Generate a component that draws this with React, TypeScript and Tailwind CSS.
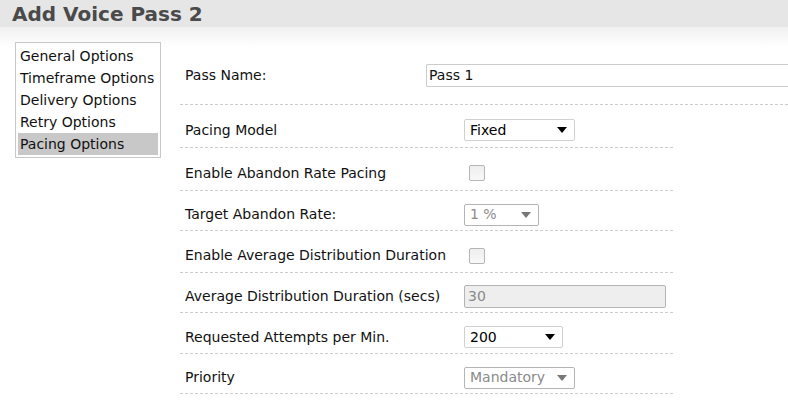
import React from 'react';

const font = { fontFamily: '"DejaVu Sans", Verdana, sans-serif' };

function Caret({ disabled }: { disabled?: boolean }) {
  return (
    <svg width="10" height="6" viewBox="0 0 10 6" className="shrink-0">
      <path d="M0 0 L10 0 L5 6 Z" fill={disabled ? '#777777' : '#000000'} />
    </svg>
  );
}

function Select({ value, width, disabled }: { value: string; width: string; disabled?: boolean }) {
  return (
    <div
      className={`flex h-[22px] items-center justify-between rounded-[2px] border pl-[5px] pr-[7px] ${width} ${
        disabled ? 'border-[#b4b4b4] text-[#8a8a8a]' : 'border-[#d0d0d0] text-black'
      }`}
    >
      <span>{value}</span>
      <Caret disabled={disabled} />
    </div>
  );
}

function Checkbox() {
  return <div className="ml-[5px] h-[16px] w-[16px] rounded-[2px] border border-[#b5b5b5] bg-gradient-to-b from-[#eeeeee] to-[#f8f8f8]" />;
}

function Row({ label, h, children }: { label: string; h: string; children: React.ReactNode }) {
  return (
    <div className={`flex items-center border-b border-dashed border-[#cccccc] pt-[8px] ${h}`}>
      <div className="w-[284px] pl-[5px]">{label}</div>
      <div className="flex items-center">{children}</div>
    </div>
  );
}

export default function App() {
  const menu = ['General Options', 'Timeframe Options', 'Delivery Options', 'Retry Options', 'Pacing Options'];
  return (
    <div className="h-[400px] w-[788px] overflow-hidden bg-white text-[14px] text-[#111]" style={font}>
      <div className="h-[27px] bg-[#e6e6e6] pl-[12px] text-[20px] font-bold leading-[28px] text-[#4a4a4a]">
        Add Voice Pass 2
      </div>
      <div className="flex bg-gradient-to-b from-[#f0f0f0] to-white to-[20px] pt-[15px]">
        <div className="ml-[15px] h-[116px] w-[146px] shrink-0 border border-[#c8c8c8] px-[2px] pt-[2px]">
          {menu.map((m) => (
            <div
              key={m}
              className={`h-[22px] pl-[2px] leading-[22px] ${m === 'Pacing Options' ? 'h-[19px] bg-[#c8c8c8] leading-[18px]' : ''}`}
            >
              {m}
            </div>
          ))}
        </div>
        <div className="ml-[19px] flex-1">
          <div className="flex h-[63px] items-center border-b border-dashed border-[#cccccc] pt-[4px]">
            <div className="w-[246px] pl-[5px]">Pass Name:</div>
            <div className="flex h-[23px] flex-1 items-center rounded-l-[2px] border border-r-0 border-[#cccccc] pl-[2px]">
              Pass 1
            </div>
          </div>
          <div className="w-[493px]">
            <Row label="Pacing Model" h="h-[43px]">
              <Select value="Fixed" width="w-[111px]" />
            </Row>
            <Row label="Enable Abandon Rate Pacing" h="h-[43px]">
              <Checkbox />
            </Row>
            <Row label="Target Abandon Rate:" h="h-[40px]">
              <Select value="1 %" width="w-[75px]" disabled />
            </Row>
            <Row label="Enable Average Distribution Duration" h="h-[42px]">
              <Checkbox />
            </Row>
            <Row label="Average Distribution Duration (secs)" h="h-[40px]">
              <div className="flex h-[23px] w-[202px] items-center rounded-[2px] border border-[#b4b4b4] bg-[#eeeeee] pl-[3px] text-[#8a8a8a]">
                30
              </div>
            </Row>
            <Row label="Requested Attempts per Min." h="h-[41px]">
              <Select value="200" width="w-[99px]" />
            </Row>
            <Row label="Priority" h="h-[40px]">
              <Select value="Mandatory" width="w-[111px]" disabled />
            </Row>
          </div>
        </div>
      </div>
    </div>
  );
}
